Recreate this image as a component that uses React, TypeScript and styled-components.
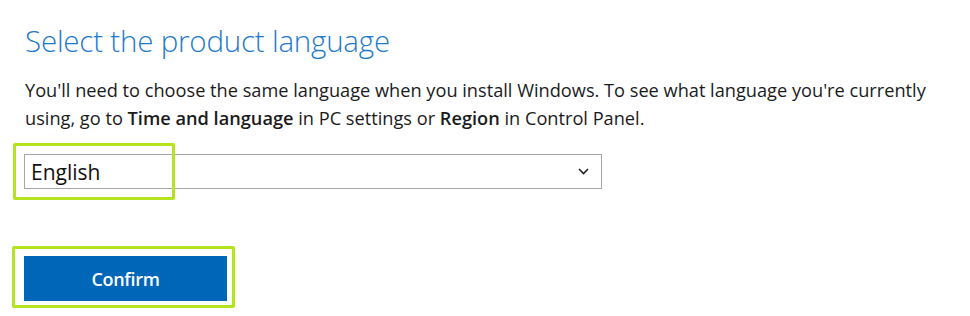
import React from 'react';
import styled, { createGlobalStyle } from 'styled-components';

const GlobalStyle = createGlobalStyle`
  body {
    margin: 0;
    background: #fff;
    font-family: 'Open Sans', 'Noto Sans', sans-serif;
    color: #1b1b1b;
  }
`;

const Page = styled.div`
  width: 970px;
  height: 316px;
  padding: 20px 0 0 25px;
  box-sizing: border-box;
  overflow: hidden;
`;

const Title = styled.h1`
  margin: 0;
  font-weight: 300;
  font-size: 29.5px;
  line-height: 42px;
  color: #1f7acb;
  letter-spacing: -0.2px;
`;

const Text = styled.p`
  margin: 14px 0 0;
  font-size: 18.2px;
  line-height: 28px;
  color: #1b1b1b;
  width: 940px;
  b {
    font-weight: 600;
  }
`;

const Field = styled.div`
  position: relative;
  margin-top: 22px;
  margin-left: -1px;
  width: 578px;
`;

const Select = styled.div`
  height: 35px;
  box-sizing: border-box;
  border: 1px solid #a6a6a6;
  display: flex;
  align-items: center;
  justify-content: space-between;
  padding: 0 12px 0 6px;
  font-size: 21px;
  color: #111;
`;

const Highlight = styled.div<{ $w: number; $h: number; $x: number; $y: number }>`
  position: absolute;
  left: ${(p) => p.$x}px;
  top: ${(p) => p.$y}px;
  width: ${(p) => p.$w}px;
  height: ${(p) => p.$h}px;
  border: 3px solid #b4e41e;
  border-radius: 2px;
  box-sizing: border-box;
  pointer-events: none;
`;

const Actions = styled.div`
  position: relative;
  margin-top: 67px;
  margin-left: -1px;
  width: 203px;
`;

const Button = styled.button`
  display: block;
  width: 203px;
  height: 45px;
  border: none;
  background: #0067b8;
  color: #fff;
  font-family: 'Open Sans', 'Noto Sans', sans-serif;
  font-weight: 600;
  font-size: 18px;
  letter-spacing: -0.3px;
  cursor: pointer;
`;

const Chevron = () => (
  <svg width="11" height="7" viewBox="0 0 11 7" fill="none">
    <path d="M1 1l4.5 4.5L10 1" stroke="#222" strokeWidth="1.6" />
  </svg>
);

export default function App() {
  return (
    <Page>
      <GlobalStyle />
      <Title>Select the product language</Title>
      <Text>
        You'll need to choose the same language when you install Windows. To see what language you're currently
        <br />
        using, go to <b>Time and language</b> in PC settings or <b>Region</b> in Control Panel.
      </Text>
      <Field>
        <Select>
          <span>English</span>
          <Chevron />
        </Select>
        <Highlight $x={-11} $y={-11} $w={162} $h={57} />
      </Field>
      <Actions>
        <Button>Confirm</Button>
        <Highlight $x={-12} $y={-10} $w={223} $h={62} />
      </Actions>
    </Page>
  );
}
